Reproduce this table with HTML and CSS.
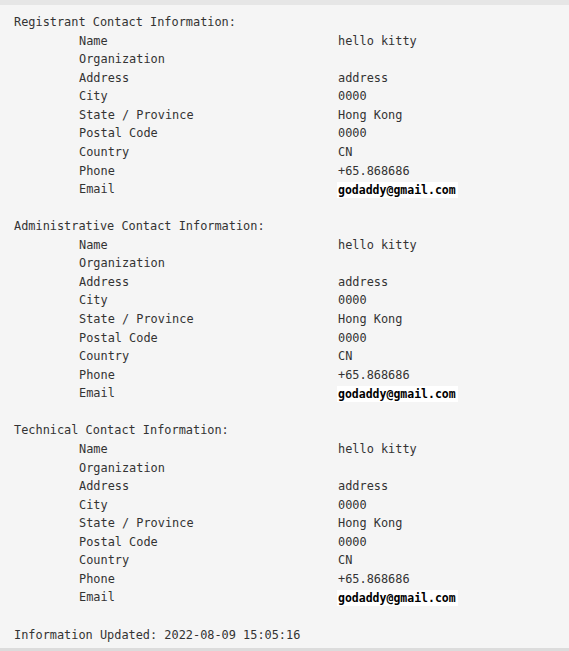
FILE: index.html
```html
<!DOCTYPE html>
<html>
<head>
<meta charset="utf-8">
<link rel="stylesheet" href="styles.css">
</head>
<body>
<div class="topbar"></div>
<div class="whois">
  <section class="block">
    <div class="head">Registrant Contact Information:</div>
    <div class="rows">
      <span class="k">Name</span><span class="v">hello kitty</span>
      <span class="k">Organization</span><span class="v"></span>
      <span class="k">Address</span><span class="v">address</span>
      <span class="k">City</span><span class="v">0000</span>
      <span class="k">State / Province</span><span class="v">Hong Kong</span>
      <span class="k">Postal Code</span><span class="v">0000</span>
      <span class="k">Country</span><span class="v">CN</span>
      <span class="k">Phone</span><span class="v">+65.868686</span>
      <span class="k">Email</span><span class="v"><span class="mail">godaddy@gmail.com</span></span>
    </div>
  </section>
  <section class="block">
    <div class="head">Administrative Contact Information:</div>
    <div class="rows">
      <span class="k">Name</span><span class="v">hello kitty</span>
      <span class="k">Organization</span><span class="v"></span>
      <span class="k">Address</span><span class="v">address</span>
      <span class="k">City</span><span class="v">0000</span>
      <span class="k">State / Province</span><span class="v">Hong Kong</span>
      <span class="k">Postal Code</span><span class="v">0000</span>
      <span class="k">Country</span><span class="v">CN</span>
      <span class="k">Phone</span><span class="v">+65.868686</span>
      <span class="k">Email</span><span class="v"><span class="mail">godaddy@gmail.com</span></span>
    </div>
  </section>
  <section class="block">
    <div class="head">Technical Contact Information:</div>
    <div class="rows">
      <span class="k">Name</span><span class="v">hello kitty</span>
      <span class="k">Organization</span><span class="v"></span>
      <span class="k">Address</span><span class="v">address</span>
      <span class="k">City</span><span class="v">0000</span>
      <span class="k">State / Province</span><span class="v">Hong Kong</span>
      <span class="k">Postal Code</span><span class="v">0000</span>
      <span class="k">Country</span><span class="v">CN</span>
      <span class="k">Phone</span><span class="v">+65.868686</span>
      <span class="k">Email</span><span class="v"><span class="mail">godaddy@gmail.com</span></span>
    </div>
  </section>
  <div class="updated">Information Updated: 2022-08-09 15:05:16</div>
</div>
</body>
</html>
```
FILE: styles.css
```css
html, body {
  margin: 0;
  padding: 0;
  background: #f5f5f5;
}
body {
  font-family: "DejaVu Sans Mono", "Liberation Mono", monospace;
  font-size: 11.9px;
  color: #333;
}
.topbar {
  height: 5px;
  background: #e6e6e6;
}
.whois {
  background: #f5f5f5;
  padding: 8px 0 4px 14px;
  line-height: 18.571px;
  border-bottom: 3px solid #dcdcdc;
}
.block {
  margin-bottom: 18.571px;
}
.head {
  white-space: pre;
}
.rows {
  display: grid;
  grid-template-columns: 259px auto;
  padding-left: 65px;
}
.k, .v {
  height: 18.571px;
  white-space: pre;
}
.mail {
  display: inline-block;
  background: #fff;
  color: #000;
  font-weight: bold;
  font-size: 11.5px;
  line-height: 16px;
  padding: 0 2px 0 1px;
  vertical-align: middle;
  margin-left: -1px;
}
.updated {
  white-space: pre;
}
```
